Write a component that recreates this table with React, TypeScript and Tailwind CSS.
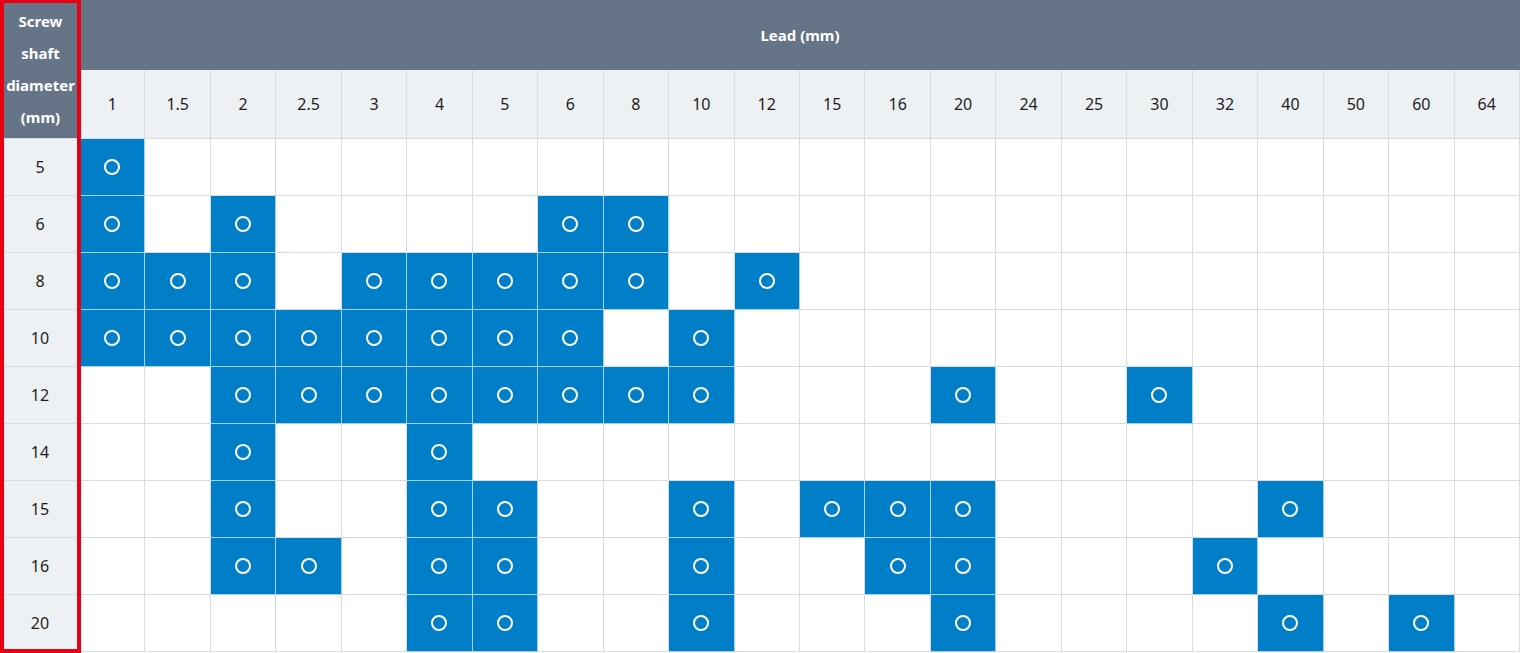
import React from "react";

const leads = ["1", "1.5", "2", "2.5", "3", "4", "5", "6", "8", "10", "12", "15", "16", "20", "24", "25", "30", "32", "40", "50", "60", "64"];

// which leads are available for each shaft diameter
const rows: { dia: string; on: string[] }[] = [
  { dia: "5", on: ["1"] },
  { dia: "6", on: ["1", "2", "6", "8"] },
  { dia: "8", on: ["1", "1.5", "2", "3", "4", "5", "6", "8", "12"] },
  { dia: "10", on: ["1", "1.5", "2", "2.5", "3", "4", "5", "6", "10"] },
  { dia: "12", on: ["2", "2.5", "3", "4", "5", "6", "8", "10", "20", "30"] },
  { dia: "14", on: ["2", "4"] },
  { dia: "15", on: ["2", "4", "5", "10", "15", "16", "20", "40"] },
  { dia: "16", on: ["2", "2.5", "4", "5", "10", "16", "20", "32"] },
  { dia: "20", on: ["4", "5", "10", "20", "40", "60"] },
];

export default function App() {
  return (
    <div className="relative w-[1520px] h-[653px] bg-white text-[#1e1e1e] font-['Noto_Sans',sans-serif] overflow-hidden">
      <div className="grid grid-cols-[80px_repeat(22,minmax(0,1fr))] grid-rows-[70px_69px_repeat(9,57px)]">
        <div className="row-span-2 bg-[#657487] text-white font-bold text-[15px] leading-[32px] pl-px flex flex-col items-center justify-center border-b border-[#d9dcdf]">
          <span>Screw</span>
          <span>shaft</span>
          <span>diameter</span>
          <span>(mm)</span>
        </div>
        <div className="col-span-22 bg-[#657487] text-white font-bold text-[15px] flex items-center justify-center">
          Lead (mm)
        </div>
        {leads.map((l) => (
          <div key={l} className="bg-[#eef1f3] border-r border-b border-[#d9dcdf] flex items-center justify-center text-[16px]">
            {l}
          </div>
        ))}
        {rows.map((r) => (
          <React.Fragment key={r.dia}>
            <div className="bg-[#eef1f3] border-b border-[#d9dcdf] flex items-center justify-center text-[16px]">
              {r.dia}
            </div>
            {leads.map((l) =>
              r.on.includes(l) ? (
                <div key={l} className="bg-[#007fc8] border-r border-b border-[#a3d3ef] flex items-center justify-center">
                  <span className="w-4 h-4 rounded-full border-2 border-white" />
                </div>
              ) : (
                <div key={l} className="bg-white border-r border-b border-[#d9dcdf]" />
              )
            )}
          </React.Fragment>
        ))}
      </div>
      <div className="pointer-events-none absolute left-0 top-0 w-[81px] h-[653px] border-4 border-t-[3px] border-[#e60012]" />
    </div>
  );
}
